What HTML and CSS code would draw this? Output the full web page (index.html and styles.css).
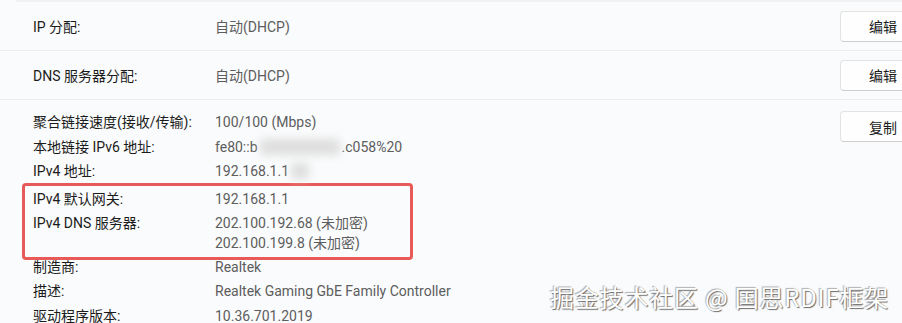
FILE: index.html
```html
<!DOCTYPE html>
<html lang="zh-CN">
<head>
  <meta charset="UTF-8">
  <title>网络属性</title>
  <link rel="stylesheet" href="styles.css">
</head>
<body>
  <div class="settings">
    <div class="card-top"></div>

    <div class="row">
      <div class="row-label">IP 分配:</div>
      <div class="row-value">自动(DHCP)</div>
      <button class="action-button">编辑</button>
    </div>

    <div class="row">
      <div class="row-label">DNS 服务器分配:</div>
      <div class="row-value">自动(DHCP)</div>
      <button class="action-button">编辑</button>
    </div>

    <div class="info">
      <div class="info-list">
        <div class="info-item">
          <span class="info-label">聚合链接速度(接收/传输):</span>
          <span class="info-value">100/100 (Mbps)</span>
        </div>
        <div class="info-item">
          <span class="info-label">本地链接 IPv6 地址:</span>
          <span class="info-value">fe80::b<span class="blur blur-wide"></span>.c058%20</span>
        </div>
        <div class="info-item">
          <span class="info-label">IPv4 地址:</span>
          <span class="info-value">192.168.1.1<span class="blur blur-small"></span></span>
        </div>
        <div class="highlight">
          <div class="info-item">
            <span class="info-label">IPv4 默认网关:</span>
            <span class="info-value">192.168.1.1</span>
          </div>
          <div class="info-item">
            <span class="info-label">IPv4 DNS 服务器:</span>
            <span class="info-value">202.100.192.68 (未加密)<br>202.100.199.8 (未加密)</span>
          </div>
        </div>
        <div class="info-item">
          <span class="info-label">制造商:</span>
          <span class="info-value">Realtek</span>
        </div>
        <div class="info-item">
          <span class="info-label">描述:</span>
          <span class="info-value">Realtek Gaming GbE Family Controller</span>
        </div>
        <div class="info-item">
          <span class="info-label">驱动程序版本:</span>
          <span class="info-value">10.36.701.2019</span>
        </div>
      </div>
      <button class="action-button copy-button">复制</button>
    </div>
  </div>

  <div class="watermark">掘金技术社区 @ 国思RDIF框架</div>
</body>
</html>
```

FILE: styles.css
```css
:root {
  --page-bg: #fafbfc;
  --line: #eceef0;
  --label-text: #1b1b1b;
  --value-text: #5d5d5d;
  --button-bg: #fefefe;
  --button-border: #e3e3e3;
  --button-bottom: #cfcfcf;
  --highlight: #e85a5a;
}

body {
  margin: 0;
  background: var(--page-bg);
  font-family: Roboto, "Noto Sans CJK SC", sans-serif;
  font-size: 14px;
  color: var(--label-text);
  overflow: hidden;
  position: relative;
  height: 323px;
}

.settings {
  width: 940px;
}

.card-top {
  height: 2px;
  margin-left: 16px;
  background: #f0f1f3;
}

/* Edit rows */
.row {
  display: flex;
  align-items: center;
  height: 48px;
  padding-left: 33px;
  border-bottom: 1px solid var(--line);
}

.row-label {
  width: 182px;
}

.row-value {
  flex: 1;
  color: var(--value-text);
}

.action-button {
  width: 86px;
  height: 31px;
  margin-right: 14px;
  background: var(--button-bg);
  border: 1px solid var(--button-border);
  border-bottom-color: var(--button-bottom);
  border-radius: 4px;
  font-family: inherit;
  font-size: 14px;
  color: var(--label-text);
  padding: 0;
  text-align: center;
}

/* Info block */
.info {
  display: flex;
  align-items: flex-start;
  padding: 10px 0 0 33px;
}

.info-list {
  flex: 1;
}

.info-item {
  display: flex;
  line-height: 24.5px;
}

.info-label {
  width: 182px;
  flex-shrink: 0;
}

.info-value {
  color: var(--value-text);
  line-height: 20px;
  padding: 2px 0 2.5px;
}

.copy-button {
  margin-top: 1px;
}

.highlight {
  margin: -1px 0 -5px -11px;
  padding: 0 0 1px 8px;
  width: 377px;
  border: 3px solid var(--highlight);
  border-radius: 4px;
}

.highlight .info-item:first-child {
  padding-top: 1px;
}

.blur {
  display: inline-block;
  height: 16px;
  vertical-align: -3px;
  background: #dedede;
  filter: blur(4px);
  border-radius: 4px;
}

.blur-wide {
  width: 80px;
  margin: 0 2px;
}

.blur-small {
  width: 18px;
  margin-left: 2px;
}

/* Watermark overlay */
.watermark {
  position: absolute;
  left: 550px;
  top: 279px;
  font-family: "Noto Sans CJK SC", sans-serif;
  font-size: 24px;
  color: #ffffff;
  letter-spacing: 0.8px;
  text-shadow: 1px 1px 1px #6a6a6a, -1px -1px 1px #b0b0b0;
}
```
